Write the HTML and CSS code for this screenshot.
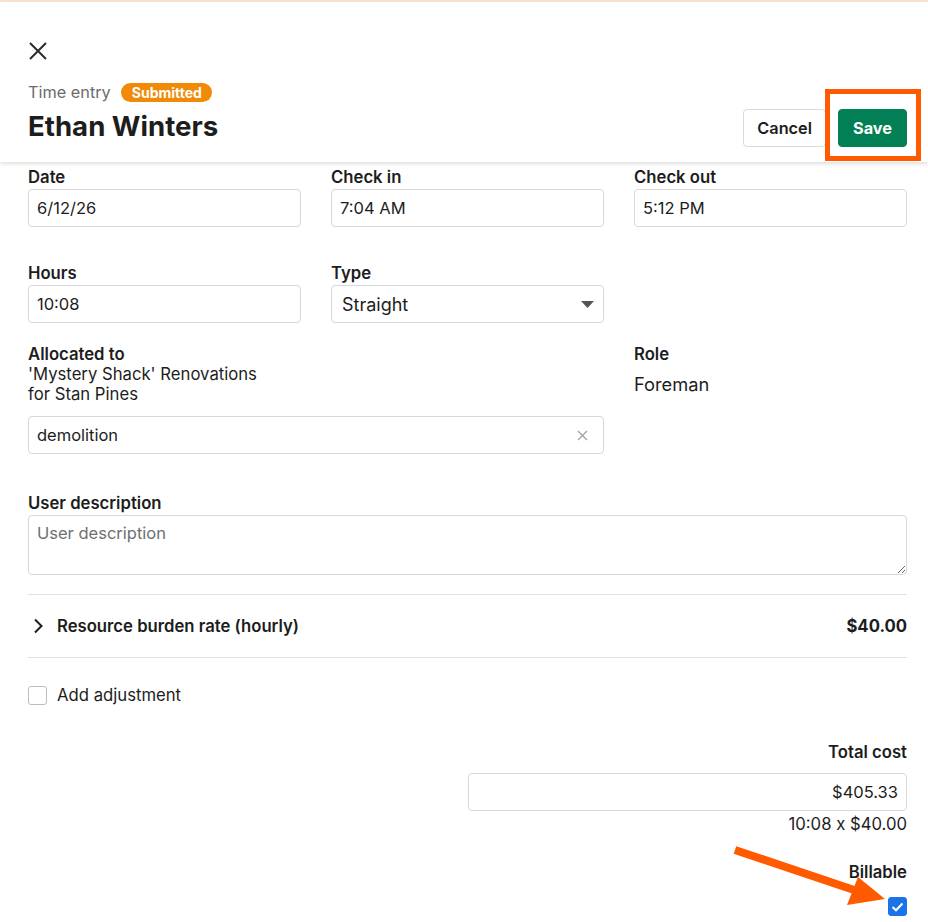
FILE: index.html
```html
<!DOCTYPE html>
<html lang="en">
<head>
    <meta charset="UTF-8">
    <meta name="viewport" content="width=device-width, initial-scale=1.0">
    <title>Time entry - Ethan Winters</title>
    <link rel="stylesheet" href="styles.css">
</head>
<body>
    <div class="top-line"></div>

    <!-- header: close, status, name and actions -->
    <div class="sheet-header">
        <button class="close-btn" aria-label="Close">
            <svg width="20" height="20" viewBox="0 0 20 20"><path d="M2 2 L18 18 M18 2 L2 18" stroke="#2b2b2b" stroke-width="2" fill="none"/></svg>
        </button>
        <div class="header-row">
            <div>
                <div class="meta">
                    <span class="meta-label">Time entry</span>
                    <span class="badge">Submitted</span>
                </div>
                <h1 class="title">Ethan Winters</h1>
            </div>
            <div class="actions">
                <button class="btn btn-cancel">Cancel</button>
                <button class="btn btn-save">Save</button>
            </div>
        </div>
        <div class="callout-box"></div>
    </div>

    <!-- form body -->
    <div class="sheet-body">
        <div class="grid3 row-first">
            <div class="field">
                <label class="label">Date</label>
                <div class="input">6/12/26</div>
            </div>
            <div class="field">
                <label class="label">Check in</label>
                <div class="input">7:04 AM</div>
            </div>
            <div class="field">
                <label class="label">Check out</label>
                <div class="input">5:12 PM</div>
            </div>
        </div>

        <div class="grid3 row-second">
            <div class="field">
                <label class="label">Hours</label>
                <div class="input">10:08</div>
            </div>
            <div class="field">
                <label class="label">Type</label>
                <div class="input select">
                    <span>Straight</span>
                    <svg width="13" height="7" viewBox="0 0 13 7"><path d="M0 0 H13 L6.5 7 Z" fill="#555"/></svg>
                </div>
            </div>
        </div>

        <div class="grid3 row-third">
            <div class="field span2">
                <label class="label">Allocated to</label>
                <div class="alloc-text">'Mystery Shack' Renovations<br>for Stan Pines</div>
                <div class="input clearable">
                    <span>demolition</span>
                    <svg width="11" height="11" viewBox="0 0 11 11"><path d="M1 1 L10 10 M10 1 L1 10" stroke="#a3a3a3" stroke-width="1.4" fill="none"/></svg>
                </div>
            </div>
            <div class="field">
                <label class="label">Role</label>
                <div class="role-value">Foreman</div>
            </div>
        </div>

        <div class="field desc-field">
            <label class="label">User description</label>
            <textarea class="textarea" placeholder="User description"></textarea>
        </div>

        <div class="rate-row">
            <div class="rate-left">
                <svg width="10" height="16" viewBox="0 0 10 16"><path d="M2 1.5 L8.5 8 L2 14.5" stroke="#1d1d1d" stroke-width="2" fill="none"/></svg>
                <span>Resource burden rate (hourly)</span>
            </div>
            <span class="rate-value">$40.00</span>
        </div>

        <div class="check-row">
            <span class="checkbox"></span>
            <span>Add adjustment</span>
        </div>

        <div class="total">
            <label class="label">Total cost</label>
            <div class="input total-input">$405.33</div>
            <div class="total-hint">10:08 x $40.00</div>
        </div>

        <div class="billable">
            <label class="label">Billable</label>
            <span class="checkbox checked">
                <svg width="13" height="10" viewBox="0 0 13 10"><path d="M1.5 5 L5 8.3 L11.5 1.5" stroke="#fff" stroke-width="2" fill="none"/></svg>
            </span>
        </div>
    </div>

    <!-- pointer towards the billable box -->
    <svg class="pointer" width="928" height="922" viewBox="0 0 928 922">
        <path d="M735 850 L866 894" stroke="#ff5a00" stroke-width="8" fill="none"/>
        <path d="M858 877 L885 899 L847 905 Z" fill="#ff5a00"/>
    </svg>
</body>
</html>
```

FILE: styles.css
```css
* {
    box-sizing: border-box;
}

body {
    margin: 0;
    font-family: Inter, "Liberation Sans", sans-serif;
    font-size: 16.7px;
    color: #1d1d1d;
    background: #fff;
    position: relative;
}

.top-line {
    height: 2px;
    background: #f8e2d2;
}

.sheet-header {
    position: relative;
    z-index: 2;
    padding: 39px 21px 15px 28px;
    background: #fff;
    box-shadow: 0 2px 4px rgba(0, 0, 0, 0.13);
}

.close-btn {
    display: block;
    width: 20px;
    height: 20px;
    padding: 0;
    border: 0;
    background: none;
}

.header-row {
    display: flex;
    justify-content: space-between;
    align-items: flex-end;
    margin-top: 20px;
}

.meta {
    display: flex;
    align-items: center;
    gap: 10px;
    height: 22px;
}

.meta-label {
    color: #6b6b6b;
    font-size: 16.3px;
}

.badge {
    display: inline-block;
    height: 19px;
    line-height: 19px;
    padding: 0 10px 0 11px;
    border-radius: 10px;
    background: #f08a07;
    color: #fff;
    font-size: 14px;
    font-weight: 700;
}

.title {
    margin: 4px 0 2px;
    font-size: 27.6px;
    line-height: 38px;
    font-weight: 700;
}

.actions {
    display: flex;
    gap: 12px;
}

.btn {
    height: 38px;
    padding: 0 14px;
    border-radius: 4px;
    font-family: inherit;
    font-size: 16.3px;
    font-weight: 600;
}

.btn-cancel {
    padding: 0 13px;
    background: #fff;
    border: 1px solid #d9d9d9;
    color: #1d1d1d;
}

.btn-save {
    background: #037f55;
    border: 1px solid #037f55;
    color: #fff;
    font-weight: 700;
}

.callout-box {
    position: absolute;
    left: 825px;
    top: 87px;
    width: 96px;
    height: 72px;
    border: 5px solid #ff5a00;
}

.sheet-body {
    padding: 5px 21px 20px 28px;
}

.grid3 {
    display: grid;
    grid-template-columns: repeat(3, 273px);
    column-gap: 30px;
}

.span2 {
    grid-column: span 2;
}

.row-second {
    margin-top: 36px;
}

.row-third {
    margin-top: 21px;
}

.label {
    display: block;
    font-weight: 600;
    line-height: 20px;
    margin-bottom: 2px;
}

.input {
    height: 38px;
    display: flex;
    align-items: center;
    padding: 0 8px;
    border: 1px solid #d8d8d8;
    border-radius: 4px;
    background: #fff;
    font-size: 16.5px;
}

.select {
    justify-content: space-between;
    padding: 0 9px 0 10px;
    font-size: 18px;
}

.clearable {
    justify-content: space-between;
    padding-right: 15px;
}

.alloc-text {
    line-height: 20px;
    margin-top: -2px;
    margin-bottom: 12px;
}

.role-value {
    font-size: 18.3px;
    margin-top: 9px;
}

.desc-field {
    margin-top: 39px;
}

.textarea {
    display: block;
    width: 100%;
    height: 60px;
    padding: 7px 8px;
    border: 1px solid #d8d8d8;
    border-radius: 4px;
    font-family: inherit;
    font-size: 16.5px;
    color: #1d1d1d;
    resize: vertical;
}

.textarea::placeholder {
    color: #707070;
}

.rate-row {
    display: flex;
    justify-content: space-between;
    align-items: center;
    height: 64px;
    margin-top: 19px;
    border-top: 1px solid #e0e0e0;
    border-bottom: 1px solid #e0e0e0;
    font-weight: 600;
}

.rate-left {
    display: flex;
    align-items: center;
    gap: 14px;
    padding-left: 5px;
}

.rate-value {
    font-weight: 700;
}

.check-row {
    display: flex;
    align-items: center;
    gap: 10px;
    margin-top: 27px;
}

.checkbox {
    display: inline-flex;
    align-items: center;
    justify-content: center;
    width: 19px;
    height: 19px;
    border: 1px solid #bdbdbd;
    border-radius: 3px;
    background: #fff;
}

.checkbox.checked {
    background: #1a73e8;
    border-color: #1a73e8;
}

.total {
    display: flex;
    flex-direction: column;
    align-items: flex-end;
    margin-top: 37px;
}

.total .label {
    margin-bottom: 11px;
}

.total-input {
    width: 439px;
    justify-content: flex-end;
}

.total-hint {
    margin-top: 3px;
    line-height: 20px;
}

.billable {
    display: flex;
    flex-direction: column;
    align-items: flex-end;
    margin-top: 28px;
}

.billable .label {
    margin-bottom: 15px;
}

.pointer {
    position: absolute;
    left: 0;
    top: 0;
    z-index: 3;
    pointer-events: none;
}
```
